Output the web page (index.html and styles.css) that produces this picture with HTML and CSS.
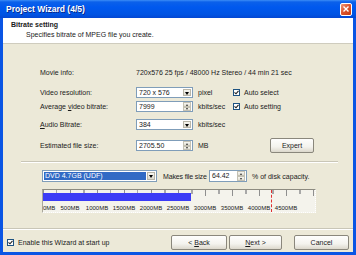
FILE: index.html
```html
<!DOCTYPE html>
<html lang="en">
<head>
  <meta charset="UTF-8" />
  <title>Project Wizard (4/5)</title>
  <link rel="stylesheet" href="styles.css">
</head>
<body>
  <div class="window">
    <div class="titlebar">
      <span class="title">Project Wizard (4/5)</span>
      <span class="close">
        <svg width="8" height="8" viewBox="0 0 8 8"><path d="M1.5 1.5 L6.5 6.5 M6.5 1.5 L1.5 6.5" stroke="#fff" stroke-width="1.4"/></svg>
      </span>
    </div>

    <div class="frame">
      <div class="header">
        <div class="h-title">Bitrate setting</div>
        <div class="h-sub">Specifies bitrate of MPEG file you create.</div>
      </div>

      <div class="settings">
        <div class="row info">
          <span class="label">Movie info:</span>
          <span>720x576 25 fps / 48000 Hz Stereo / 44 min 21 sec</span>
        </div>

        <div class="row r1">
          <span class="label">Video resolution:</span>
          <div class="field"><span class="val">720 x 576</span><span class="drop"></span></div>
          <span class="unit">pixel</span>
          <div class="check"><span class="box"><svg width="5" height="5" viewBox="0 0 5 5"><path d="M0.5 2.3 L2 3.8 L4.5 0.8" stroke="#222" stroke-width="1.1" fill="none"/></svg></span>Auto select</div>
        </div>

        <div class="row r2">
          <span class="label">Average <u>v</u>ideo bitrate:</span>
          <div class="field"><span class="val">7999</span><span class="spin"><i></i><i class="dn"></i></span></div>
          <span class="unit">kbits/sec</span>
          <div class="check"><span class="box"><svg width="5" height="5" viewBox="0 0 5 5"><path d="M0.5 2.3 L2 3.8 L4.5 0.8" stroke="#222" stroke-width="1.1" fill="none"/></svg></span>Auto setting</div>
        </div>

        <div class="row r3">
          <span class="label"><u>A</u>udio Bitrate:</span>
          <div class="field"><span class="val">384</span><span class="drop"></span></div>
          <span class="unit">kbits/sec</span>
        </div>

        <div class="row r4">
          <span class="label">Estimated file size:</span>
          <div class="field"><span class="val">2705.50</span><span class="spin"><i></i><i class="dn"></i></span></div>
          <span class="unit">MB</span>
          <button class="btn expert">Expert</button>
        </div>
      </div>

      <div class="sep"></div>

      <div class="disk-row">
        <div class="field wide"><span class="selected">DVD 4.7GB (UDF)</span><span class="drop"></span></div>
        <span class="makes">Makes file size</span>
        <div class="field pct-field"><span class="val">64.42</span><span class="spin"><i></i><i class="dn"></i></span></div>
        <span class="pct">% of disk capacity.</span>
      </div>

      <div class="ruler">
        <div class="track"><div class="fill"></div></div>
        <div class="scale">
          <span>0MB</span><span>500MB</span><span>1000MB</span><span>1500MB</span><span>2000MB</span>
          <span>2500MB</span><span>3000MB</span><span>3500MB</span><span>4000MB</span><span>4500MB</span>
        </div>
        <div class="limit"></div>
      </div>

      <div class="footer-sep"></div>

      <div class="footer">
        <div class="check"><span class="box"><svg width="5" height="5" viewBox="0 0 5 5"><path d="M0.5 2.3 L2 3.8 L4.5 0.8" stroke="#222" stroke-width="1.1" fill="none"/></svg></span>Enable this Wizard at start up</div>
        <button class="btn back">&lt; <u>B</u>ack</button>
        <button class="btn next"><u>N</u>ext &gt;</button>
        <button class="btn cancel">Cancel</button>
      </div>
    </div>
  </div>
</body>
</html>
```

FILE: styles.css
```css
* {
  box-sizing: border-box;
}

body {
  margin: 0;
  font-family: "Liberation Sans", Arial, sans-serif;
  font-size: 7px;
  color: #1a1a1a;
  background: #ece9d8;
}

.window {
  width: 356px;
  height: 255px;
  display: flex;
  flex-direction: column;
}

/* title bar */
.titlebar {
  height: 18px;
  flex-shrink: 0;
  display: flex;
  align-items: center;
  padding: 0 4px 0 6px;
  background: linear-gradient(#3c8df6 0, #0b60ea 2px, #0058ee 40%, #0054e3 80%, #0447d2 100%);
}

.title {
  color: #fff;
  font-weight: bold;
  font-size: 8.5px;
  text-shadow: 1px 1px 0 #0b2a8a;
}

.close {
  margin-left: auto;
  width: 12px;
  height: 13px;
  display: flex;
  align-items: center;
  justify-content: center;
  border: 1px solid #fff;
  border-radius: 2px;
  background: linear-gradient(135deg, #f09a78 0%, #dc5631 45%, #c43a12 100%);
}

.frame {
  flex: 1;
  display: flex;
  flex-direction: column;
  border: 3px solid #0a55e4;
  border-top: 0;
  background: #ece9d8;
}

/* header */
.header {
  height: 26px;
  padding: 3px 0 0 8px;
  background: #fff;
  border-bottom: 1px solid #cfccbe;
}

.h-title {
  font-weight: bold;
  line-height: 8px;
}

.h-sub {
  margin: 2px 0 0 15px;
  line-height: 8px;
}

/* settings */
.settings {
  padding: 23px 0 0 37px;
}

.row {
  display: flex;
  align-items: center;
  height: 11px;
}

.r1 { margin-top: 9px; }
.r2 { margin-top: 3px; }
.r3 { margin-top: 7px; }
.r4 { margin-top: 10px; }

.label {
  width: 96px;
  flex-shrink: 0;
}

.field {
  width: 57px;
  height: 11px;
  flex-shrink: 0;
  display: flex;
  background: #fff;
  border: 1px solid #7f9db9;
}

.field .val {
  flex: 1;
  padding-left: 2px;
  line-height: 9px;
  white-space: nowrap;
}

.drop {
  position: relative;
  width: 8px;
  margin: 1px 1px 1px 0;
  background: linear-gradient(#f7f6f1, #dedbcf);
  border: 1px solid #b9b6a8;
}

.drop::after {
  content: "";
  position: absolute;
  left: 1px;
  top: 2px;
  border-top: 3px solid #000;
  border-left: 2px solid transparent;
  border-right: 2px solid transparent;
}

.spin {
  width: 8px;
  margin: 0 1px 0 0;
  display: flex;
  flex-direction: column;
}

.spin i {
  flex: 1;
  position: relative;
  background: linear-gradient(#f7f6f1, #e2dfd3);
  border: 1px solid #c4c1b3;
}

.spin i::after {
  content: "";
  position: absolute;
  left: 1.5px;
  top: 0.5px;
  border-bottom: 2px solid #333;
  border-left: 1.5px solid transparent;
  border-right: 1.5px solid transparent;
}

.spin i.dn::after {
  border-bottom: 0;
  border-top: 2px solid #333;
}

.unit {
  width: 40px;
  flex-shrink: 0;
  padding-left: 5px;
}

.check {
  display: flex;
  align-items: center;
  gap: 4px;
  white-space: nowrap;
}

.box {
  width: 7px;
  height: 7px;
  display: flex;
  align-items: center;
  justify-content: center;
  background: #fff;
  border: 1px solid #1d5281;
}

.btn {
  height: 15px;
  padding: 0;
  font-family: inherit;
  font-size: 7px;
  color: #1a1a1a;
  border: 1px solid #8a877c;
  border-radius: 2px;
  background: linear-gradient(#fefefd, #f4f3ee 60%, #dcd8cc);
}

.expert {
  width: 44px;
  margin-left: 37px;
}

.sep {
  height: 2px;
  margin: 10px 15px 0 18px;
  border-top: 1px solid #c9c6b7;
  border-bottom: 1px solid #fff;
}

/* disk capacity */
.disk-row {
  display: flex;
  align-items: center;
  height: 12px;
  margin-top: 7px;
  padding-left: 39px;
}

.field.wide {
  width: 115px;
  height: 12px;
}

.selected {
  flex: 1;
  margin: 1px;
  padding-left: 1px;
  line-height: 8px;
  color: #fff;
  background: #316ac5;
}

.makes {
  width: 46px;
  margin-left: 6px;
  letter-spacing: -0.15px;
  white-space: nowrap;
}

.field.pct-field {
  width: 38px;
  height: 12px;
}

.pct {
  margin-left: 5px;
}

.ruler {
  position: relative;
  width: 274px;
  height: 24px;
  margin: 7px 0 0 39px;
  background: #f4f3ec;
  border-top: 1px solid #8d8b80;
  border-left: 1px solid #a9a79b;
  border-right: 1px dotted #fff;
  border-bottom: 1px dotted #fff;
}

.track {
  height: 11px;
  padding-top: 3px;
  background:
    repeating-linear-gradient(90deg, #8f8f8f 0 1px, transparent 1px 27px) 0 0 / 100% 6px no-repeat,
    repeating-linear-gradient(90deg, #a8a8a8 0 1px, transparent 1px 13.5px) 0 0 / 100% 4px no-repeat;
}

.fill {
  width: 148px;
  height: 8px;
  background: #3c3cf6;
}

.scale {
  display: flex;
  margin-top: 3px;
  font-size: 6px;
  line-height: 8px;
  white-space: nowrap;
}

.scale span {
  width: 27px;
  flex-shrink: 0;
  text-align: center;
}

.scale span:first-child {
  width: 13.5px;
  text-align: left;
}

.limit {
  position: absolute;
  left: 228px;
  top: 0;
  bottom: 0;
  border-left: 1px dashed #e03030;
}

/* footer */
.footer-sep {
  height: 2px;
  margin-top: auto;
  border-top: 1px solid #c9c6b7;
  border-bottom: 1px solid #fff;
}

.footer {
  height: 22px;
  display: flex;
  align-items: center;
  padding: 3px 4px 0 4px;
}

.back {
  width: 56px;
  margin-left: auto;
}

.next {
  width: 53px;
  margin-left: 2px;
}

.cancel {
  width: 55px;
  margin-left: 12px;
}
```
